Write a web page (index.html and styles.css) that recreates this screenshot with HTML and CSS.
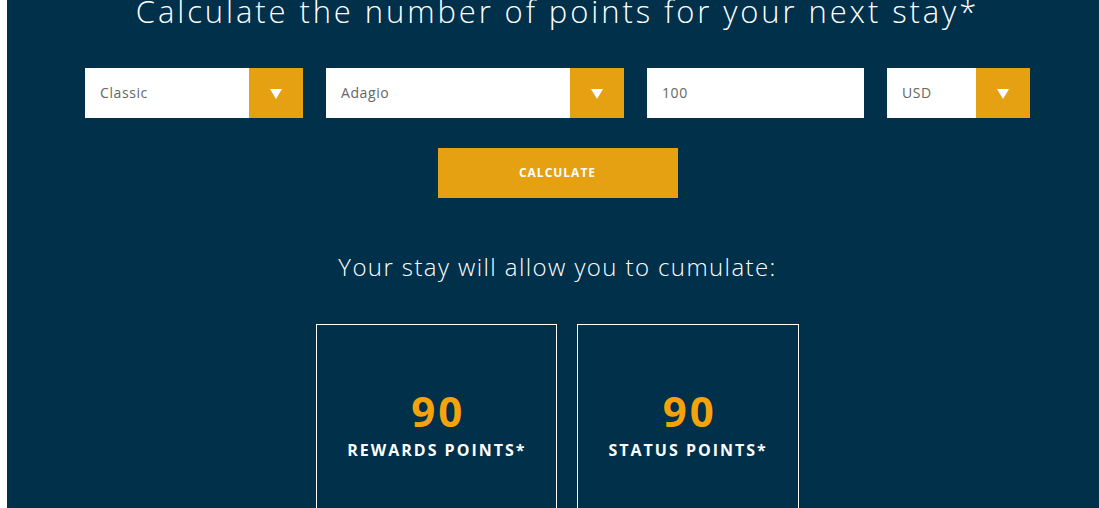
FILE: index.html
```html
<!DOCTYPE html>
<html lang="en">
<head>
<meta charset="UTF-8">
<meta name="viewport" content="width=device-width, initial-scale=1.0">
<title>Points calculator</title>
<link rel="stylesheet" href="styles.css">
</head>
<body>

<main class="calc">
    <h1 class="calc-title">Calculate the number of points for your next stay*</h1>

    <form class="calc-form">
        <div class="field field-tier">
            <span class="field-value">Classic</span>
            <span class="field-arrow">
                <svg width="12" height="10" viewBox="0 0 12 10"><polygon points="0,0 12,0 6,10" fill="#ffffff"/></svg>
            </span>
        </div>
        <div class="field field-brand">
            <span class="field-value">Adagio</span>
            <span class="field-arrow">
                <svg width="12" height="10" viewBox="0 0 12 10"><polygon points="0,0 12,0 6,10" fill="#ffffff"/></svg>
            </span>
        </div>
        <div class="field field-amount">
            <span class="field-value">100</span>
        </div>
        <div class="field field-currency">
            <span class="field-value">USD</span>
            <span class="field-arrow">
                <svg width="12" height="10" viewBox="0 0 12 10"><polygon points="0,0 12,0 6,10" fill="#ffffff"/></svg>
            </span>
        </div>
    </form>

    <button type="button" class="calc-btn">CALCULATE</button>

    <p class="calc-result">Your stay will allow you to cumulate:</p>

    <div class="cards">
        <div class="card">
            <span class="card-num">90</span>
            <span class="card-label">REWARDS POINTS*</span>
        </div>
        <div class="card">
            <span class="card-num">90</span>
            <span class="card-label">STATUS POINTS*</span>
        </div>
    </div>
</main>

</body>
</html>
```

FILE: styles.css
```css
body {
    margin: 0;
    background-color: #ffffff;
    font-family: 'Open Sans', 'Liberation Sans', sans-serif;
    overflow: hidden;
}

.calc {
    margin-left: 7px;
    padding-left: 9px; /* content centre sits a bit right of the panel centre */
    min-height: 508px;
    background-color: #00304a;
    display: flex;
    flex-direction: column;
    align-items: center;
    color: #ffffff;
}

.calc > * {
    flex-shrink: 0;
}

.calc-title {
    margin: -9px 0 0;
    font-size: 31px;
    line-height: 40px;
    font-weight: 300;
    letter-spacing: 2.9px;
    white-space: nowrap;
}

/* --- Form row --- */
.calc-form {
    display: flex;
    gap: 23px;
    margin-top: 37px;
}

.field {
    display: flex;
    height: 50px;
    background-color: #ffffff;
}

.field-tier { width: 218px; }
.field-brand { width: 298px; }
.field-amount { width: 217px; }
.field-currency { width: 143px; }

.field-value {
    flex: 1;
    display: flex;
    align-items: center;
    padding: 0 0 2px 15px;
    font-size: 14px;
    font-weight: 500;
    letter-spacing: 0.6px;
    color: #666666;
}

.field-arrow {
    width: 54px;
    display: flex;
    align-items: center;
    justify-content: center;
    padding-top: 2px;
    background-color: #e5a111;
}

/* --- Button --- */
.calc-btn {
    margin-top: 30px;
    width: 240px;
    height: 50px;
    padding: 0 0 2px;
    border: 0;
    background-color: #e5a111;
    color: #ffffff;
    font-family: inherit;
    font-size: 12px;
    font-weight: 700;
    letter-spacing: 1px;
    cursor: pointer;
}

.calc-result {
    margin: 52px 0 0;
    font-size: 24px;
    font-weight: 300;
    letter-spacing: 1.4px;
}

/* --- Result cards --- */
.cards {
    display: flex;
    gap: 20px;
    margin-top: 41px;
}

.card {
    display: flex;
    flex-direction: column;
    align-items: center;
    padding: 62px 30px 60px;
    border: 1px solid #ffffff;
    height: 200px;
    box-sizing: border-box;
}

.card-num {
    font-size: 42px;
    font-weight: 700;
    line-height: 48px;
    letter-spacing: 3px;
    margin-right: -3px;
    color: #f5a30c;
}

.card-label {
    margin-top: 4px;
    font-size: 16px;
    font-weight: 700;
    line-height: 22px;
    letter-spacing: 2px;
}
```
